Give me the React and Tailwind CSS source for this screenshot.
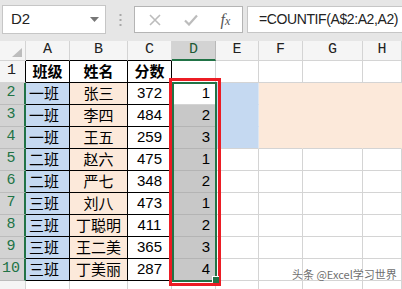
import React from "react";

const rows = [
  ["一班", "张三", 372, 1],
  ["一班", "李四", 484, 2],
  ["一班", "王五", 259, 3],
  ["二班", "赵六", 475, 1],
  ["二班", "严七", 348, 2],
  ["三班", "刘八", 473, 1],
  ["三班", "丁聪明", 411, 2],
  ["三班", "王二美", 365, 3],
  ["三班", "丁美丽", 287, 4],
];

const letters = ["A", "B", "C", "D", "E", "F", "G", "H"];

const cjk = "font-['Noto_Sans_CJK_SC','Noto_Sans',sans-serif]";
const num = "font-['Liberation_Sans',Arial,sans-serif]";
const hdr = "font-['Liberation_Mono','DejaVu_Sans_Mono',monospace]";

// fill for the E2:H4 block
const fillOf = (r, c) => {
  if (r < 2 || r > 4) return null;
  if (c === 4) return "blue";
  if (c >= 5) return "peach";
  return null;
};

const TopBar = () => (
  <div className="h-[41px] bg-[#e6e6e6] flex items-start pt-[5px] pl-[2px]">
    {/* name box */}
    <div className="w-[104px] h-[29px] bg-white border border-[#c6c6c6] flex items-center justify-between pl-[8px] pr-[6px]">
      <span className={`${num} text-[15px] text-[#222]`}>D2</span>
      <svg width="9" height="6" viewBox="0 0 9 6">
        <path d="M0 0h9L4.5 5z" fill="#777" />
      </svg>
    </div>
    <div className="w-[28px] h-[29px] flex items-center justify-center">
      <svg width="3" height="12" viewBox="0 0 3 12">
        <rect x="0.5" y="0" width="2" height="2" fill="#a8a8a8" />
        <rect x="0.5" y="5" width="2" height="2" fill="#a8a8a8" />
        <rect x="0.5" y="10" width="2" height="2" fill="#a8a8a8" />
      </svg>
    </div>
    {/* formula buttons */}
    <div className="mt-[1px] w-[109px] h-[27px] bg-white border border-[#b4b4b4] flex items-center">
      <div className="w-[37px] flex justify-center pl-[2px]">
        <svg width="12" height="12" viewBox="0 0 12 12">
          <path d="M1 1l10 10M11 1L1 11" stroke="#bcbcbc" strokeWidth="1.6" />
        </svg>
      </div>
      <div className="w-[37px] flex justify-center">
        <svg width="14" height="12" viewBox="0 0 14 12">
          <path d="M1 6.5l4 4L13 1.5" stroke="#bcbcbc" strokeWidth="2.2" fill="none" />
        </svg>
      </div>
      <div className="w-[33px] flex justify-center">
        <span className="font-['Liberation_Serif',serif] italic text-[16px] text-[#555] leading-none">
          f<span className="text-[12px]">x</span>
        </span>
      </div>
    </div>
    {/* formula box */}
    <div className="ml-[4px] mt-[1px] flex-1 h-[27px] bg-white border border-[#c6c6c6] border-r-0 flex items-center pl-[11px]">
      <span className={`${num} text-[14px] tracking-[-0.4px] text-[#222]`}>=COUNTIF(A$2:A2,A2)</span>
    </div>
  </div>
);

const HeaderRow = () => (
  <>
    <div className="relative h-[20px] bg-[#f5f5f5] border-r border-b border-[#d4d4d4]">
      <svg className="absolute left-[12px] top-[7px]" width="10" height="9" viewBox="0 0 10 9">
        <path d="M10 0v9H0z" fill="#bdbdbd" />
      </svg>
    </div>
    {letters.map((l, i) => {
      let cls = "bg-[#f5f5f5] border-r border-b border-[#d4d4d4] text-[#222]";
      if (i <= 2) cls = "bg-[#f5f5f5] border-r border-[#d4d4d4] border-b border-b-black text-[#222]";
      if (i === 3) cls = "bg-[#d3d3d3] border-r border-[#b8b8b8] border-b-2 border-b-[#217346] text-[#1e5a36]";
      return (
        <div key={i} className={`h-[20px] flex items-center justify-center ${hdr} text-[15px] ${cls}`}>
          {l}
        </div>
      );
    })}
  </>
);

const Row = ({ r, cells }) => {
  const selected = r >= 2 && r <= 10;
  let headCls = "bg-[#f5f5f5] border-b border-[#d4d4d4] border-r text-[#222]";
  if (r === 1) headCls = "bg-[#f5f5f5] border-b border-[#d4d4d4] border-r border-r-black text-[#222]";
  if (selected) headCls = "bg-[#d3d3d3] border-b border-[#bcbcbc] border-r-2 border-r-[#217346] text-[#217346]";

  return (
    <>
      <div className={`h-[22px] flex items-center justify-center pr-[2px] ${hdr} text-[15px] ${headCls}`}>
        {r <= 10 ? r : ""}
      </div>
      {letters.map((_, c) => {
        const inTable = c <= 2 && r <= 10;
        let bg = "bg-white";
        let border = inTable ? "border-r border-b border-black" : "border-r border-b border-[#d4d4d4]";
        let content = null;
        let align = "justify-center";
        let font = cjk;

        if (r <= 10 && cells) {
          const v = cells[c];
          if (c === 0) {
            content = v;
            if (r > 1) {
              bg = "bg-[#c5d9f1]";
              align = "justify-start pl-[3px]";
            }
          } else if (c === 1) {
            content = v;
            if (r > 1) bg = "bg-[#fce9da]";
          } else if (c === 2) {
            content = v;
            if (r > 1) font = num;
          } else if (c === 3) {
            if (r > 1) {
              content = v;
              font = num;
              align = "justify-end pr-[5px]";
              if (r > 2) {
                bg = "bg-[#c8c8c8]";
                border = "border-r border-b border-[#b4b4b4]";
              }
            }
          }
        }

        const fill = fillOf(r, c);
        if (fill === "blue") {
          bg = "bg-[#c5d9f1]";
          border = r === 4 ? "border-r border-r-[#dde6f0] border-b border-b-[#d4d4d4]" : "border-r border-b border-[#c5d9f1] border-r-[#dde6f0]";
        }
        if (fill === "peach") {
          bg = "bg-[#fce9da]";
          border = r === 4 ? "border-r border-r-[#fce9da] border-b border-b-[#d4d4d4]" : "border-r border-b border-[#fce9da]";
        }

        const weight = r === 1 ? "font-bold" : "font-normal";
        return (
          <div
            key={c}
            className={`h-[22px] flex items-center overflow-hidden whitespace-nowrap text-[15px] text-black ${font} ${weight} ${bg} ${border} ${align}`}
          >
            {content}
          </div>
        );
      })}
    </>
  );
};

export default function App() {
  return (
    <div className="w-[402px] h-[289px] overflow-hidden bg-white">
      <TopBar />
      <div className="relative">
        <div className="grid grid-cols-[26px_44px_58px_44px_44px_43px_44px_60px_1fr]">
          <HeaderRow />
          <Row r={1} cells={["班级", "姓名", "分数", ""]} />
          {rows.map((cells, i) => (
            <Row key={i} r={i + 2} cells={cells} />
          ))}
          <Row r={11} cells={null} />
        </div>

        {/* red marker box */}
        <div className="absolute left-[169px] top-[37px] w-[52px] h-[208px] border-[3px] border-[#ec1c24]" />
        {/* active selection */}
        <div className="absolute left-[172px] top-[41px] w-[45px] h-[200px] border-2 border-[#217346]" />
        {/* fill handle */}
        <div className="absolute left-[212px] top-[235px] w-[7px] h-[7px] bg-[#217346] border-l border-t border-white" />

        {/* watermark */}
        <div className="absolute left-[292px] top-[225px] font-['Noto_Sans_CJK_SC','Noto_Sans',sans-serif] text-[11px] text-[#6f6f6f] [text-shadow:0_0_2px_#fff]">
          头条 @Excel学习世界
        </div>
      </div>
    </div>
  );
}
